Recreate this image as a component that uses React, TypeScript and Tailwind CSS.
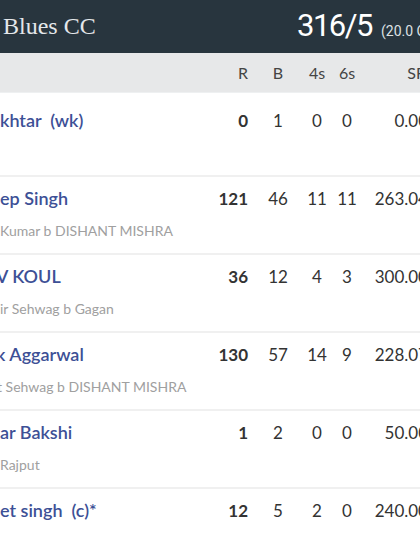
const batsmen = [
  { name: "khtar  (wk)", cut: 0, outCut: 0, out: "", r: "0", b: "1", f: "0", s: "0", sr: "0.00" },
  { name: "ep Singh", cut: 0, outCut: 0, out: "Kumar b DISHANT MISHRA", r: "121", b: "46", f: "11", s: "11", sr: "263.04" },
  { name: "V KOUL", cut: 4, outCut: 0, out: "ir Sehwag b Gagan", r: "36", b: "12", f: "4", s: "3", sr: "300.00" },
  { name: "k Aggarwal", cut: 4, outCut: 3, out: "t Sehwag b DISHANT MISHRA", r: "130", b: "57", f: "14", s: "9", sr: "228.07" },
  { name: "ar Bakshi", cut: 0, outCut: 0, out: "Rajput", r: "1", b: "2", f: "0", s: "0", sr: "50.00" },
  { name: "et singh  (c)*", cut: 0, outCut: 0, out: "", r: "12", b: "5", f: "2", s: "0", sr: "240.00" },
];

const cols = "grid grid-cols-[208px_40px_50px_38px_22px_70px] w-[428px] items-center";

export default function App() {
  return (
    <div className="w-[420px] h-[560px] overflow-hidden bg-white font-['Lato',sans-serif]">
      {/* team + score */}
      <div className="h-[53px] bg-[#28353e] flex items-center whitespace-nowrap">
        <div className="shrink-0 pl-[3px] text-[24px] text-[#e4e7ea] font-['Liberation_Serif',serif] w-[297px] pb-[2px]">
          Blues CC
        </div>
        <div className="shrink-0 flex items-baseline text-white font-['Roboto',sans-serif]">
          <span className="text-[31px] tracking-[-1.5px]">316/5</span>
          <span className="ml-[9px] text-[14px] text-[#dde1e4]">(20.0 Ov)</span>
        </div>
      </div>

      {/* column labels */}
      <div className="h-[40px] bg-[#e7e8e9] border-b border-[#eef0f1] text-[16px] text-[#444]">
        <div className={`${cols} h-full`}>
          <div />
          <div className="text-right">R</div>
          <div className="text-center pl-[10px]">B</div>
          <div className="text-center">4s</div>
          <div className="text-center">6s</div>
          <div className="text-right pr-[2px]">SR</div>
        </div>
      </div>

      {batsmen.map((p, i) => (
        <div
          key={i}
          className={`border-b-2 border-[#f0f0f0] ${i === 0 ? "h-[84px] pt-[14px]" : "h-[78px] pt-[8px]"}`}
        >
          <div className={`${cols} text-[17px] text-[#333]`}>
            <div className="overflow-hidden whitespace-pre">
              <span
                className={`block text-[18px] font-semibold text-[#3d5096] ${p.cut ? "-ml-[4px]" : ""}`}
              >
                {p.name}
              </span>
            </div>
            <div className="text-right font-bold">{p.r}</div>
            <div className="text-center pl-[10px]">{p.b}</div>
            <div className="text-center">{p.f}</div>
            <div className="text-center">{p.s}</div>
            <div className="text-right">{p.sr}</div>
          </div>
          {p.out && (
            <div className={`mt-[8px] text-[14px] text-[#a0a0a0] whitespace-nowrap ${p.outCut ? "-ml-[3px]" : ""}`}>
              {p.out}
            </div>
          )}
        </div>
      ))}
    </div>
  );
}
